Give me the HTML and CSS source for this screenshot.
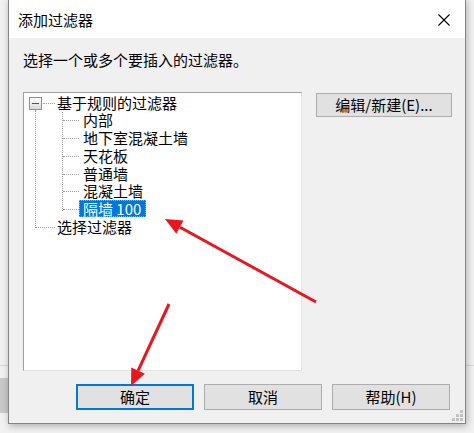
FILE: index.html
```html
<!DOCTYPE html>
<html lang="zh-CN">
<head>
<meta charset="utf-8">
<title>添加过滤器</title>
<link rel="stylesheet" href="styles.css">
</head>
<body>
<div class="desktop">
  <div class="desk-gap1"></div>
  <div class="desk-line"></div>
  <div class="desk-gap2"></div>
  <div class="desk-band"></div>
</div>

<div class="dialog">
  <div class="titlebar">
    <span class="title">添加过滤器</span>
    <svg class="close" width="12" height="12" viewBox="0 0 12 12"><path d="M0.5 0.5 L11.5 11.5 M11.5 0.5 L0.5 11.5" stroke="#000" stroke-width="1.1" fill="none"/></svg>
  </div>
  <div class="content">
    <div class="prompt">选择一个或多个要插入的过滤器。</div>
    <div class="main">
      <div class="tree">
        <ul class="lvl0">
          <li>
            <div class="row"><span class="toggle"></span><span class="hl root-hl"></span><span class="label">基于规则的过滤器</span></div>
            <ul class="lvl1">
              <li><span class="hl"></span><span class="label">内部</span></li>
              <li><span class="hl"></span><span class="label">地下室混凝土墙</span></li>
              <li><span class="hl"></span><span class="label">天花板</span></li>
              <li><span class="hl"></span><span class="label">普通墙</span></li>
              <li><span class="hl"></span><span class="label">混凝土墙</span></li>
              <li><span class="hl"></span><span class="label selected">隔墙 100</span></li>
            </ul>
          </li>
          <li>
            <div class="row last-row"><span class="hl sib-hl"></span><span class="label">选择过滤器</span></div>
          </li>
        </ul>
      </div>
      <div class="side">
        <button class="btn edit">编辑/新建(E)...</button>
      </div>
    </div>
    <div class="actions">
      <button class="btn default">确定</button>
      <button class="btn">取消</button>
      <button class="btn">帮助(H)</button>
    </div>
  </div>
  <svg class="grip" width="12" height="12" viewBox="0 0 12 12">
    <rect x="8" y="0" width="3" height="3" fill="#c2c2c2"/>
    <rect x="4" y="4" width="3" height="3" fill="#c2c2c2"/>
    <rect x="8" y="4" width="3" height="3" fill="#c2c2c2"/>
    <rect x="0" y="8" width="3" height="3" fill="#c2c2c2"/>
    <rect x="4" y="8" width="3" height="3" fill="#c2c2c2"/>
    <rect x="8" y="8" width="3" height="3" fill="#c2c2c2"/>
  </svg>
</div>

<svg class="arrows" width="474" height="433" viewBox="0 0 474 433">
  <line x1="316" y1="302" x2="180" y2="227.2" stroke="#e8161e" stroke-width="3"/>
  <polygon points="165,219 183.5,220.6 176.3,233.8" fill="#e8161e"/>
  <line x1="169" y1="304" x2="138.1" y2="370.6" stroke="#e8161e" stroke-width="3"/>
  <polygon points="131,386 144.9,373.7 131.3,367.4" fill="#e8161e"/>
</svg>
</body>
</html>
```

FILE: styles.css
```css
html, body {
  margin: 0;
  padding: 0;
}
body {
  width: 474px;
  height: 433px;
  overflow: hidden;
  background: #f1f1f1;
  position: relative;
  font-family: "Noto Sans CJK SC", "Noto Sans", sans-serif;
  color: #000;
}

/* desktop behind the window */
.desktop {
  display: flex;
  flex-direction: column;
}
.desk-gap1 { height: 365px; }
.desk-line { height: 1px; background: #d6d6d6; }
.desk-gap2 { height: 12px; }
.desk-band { height: 35px; width: 40px; background: #c8c8c8; }

/* the dialog window */
.dialog {
  position: absolute;
  left: 8px;
  top: -1px;
  width: 458px;
  height: 425px;
  box-sizing: border-box;
  border: 1px solid #858585;
  background: #f0f0f0;
  box-shadow: 1px 2px 7px rgba(0, 0, 0, 0.28);
  display: flex;
  flex-direction: column;
}

.titlebar {
  height: 38px;
  flex: none;
  background: #fff;
  display: flex;
  align-items: center;
  justify-content: space-between;
  padding: 0 15px 0 9px;
}
.title {
  font-size: 15px;
  line-height: 20px;
  margin-top: 1px;
}
.close {
  display: block;
  margin-top: 1px;
}

.content {
  flex: 1;
  display: flex;
  flex-direction: column;
  padding: 12px 13px 0 14px;
}
.prompt {
  font-size: 15px;
  line-height: 20px;
  height: 20px;
}

.main {
  display: flex;
  align-items: flex-start;
  gap: 14px;
  margin-top: 22px;
}

/* tree view */
.tree {
  width: 279px;
  height: 279px;
  box-sizing: border-box;
  background: #fff;
  border-top: 1px solid #a0a0a0;
  border-left: 1px solid #a0a0a0;
  border-right: 1px solid #e3e3e3;
  border-bottom: 1px solid #e3e3e3;
  padding-top: 1px;
  font-size: 15px;
}
.tree ul {
  list-style: none;
  margin: 0;
  padding: 0;
}
.lvl0 {
  position: relative;
}
.lvl0::before {
  content: "";
  position: absolute;
  left: 11px;
  top: 16px;
  height: 118px;
  border-left: 1px dotted #a0a0a0;
}
.row {
  display: flex;
  align-items: center;
  height: 18px;
  padding-left: 5px;
}
.last-row {
  padding-left: 12px;
  height: 17px;
}
.toggle {
  width: 13px;
  height: 13px;
  box-sizing: border-box;
  border: 1px solid #919191;
  background: linear-gradient(#ffffff, #d9d9d9);
  display: flex;
  align-items: center;
  justify-content: center;
  position: relative;
  z-index: 1;
}
.toggle::after {
  content: "";
  width: 7px;
  height: 1px;
  background: #3b56a3;
}
.hl {
  height: 0;
  border-top: 1px dotted #a0a0a0;
  flex: none;
}
.root-hl {
  width: 12px;
  margin: 0 2px 0 1px;
}
.sib-hl {
  width: 19px;
  margin-right: 2px;
}
.label {
  line-height: 17px;
  height: 17px;
  white-space: nowrap;
  margin-bottom: 2px;
}

.lvl1 {
  position: relative;
}
.lvl1::before {
  content: "";
  position: absolute;
  left: 38px;
  top: 0;
  height: 99px;
  border-left: 1px dotted #a0a0a0;
}
.lvl1 li {
  display: flex;
  align-items: center;
  height: 18px;
  padding-left: 39px;
}
.lvl1 li:nth-child(odd) {
  height: 17.6px;
}
.lvl1 .hl {
  width: 16px;
}
.lvl1 .label {
  padding: 0 5px 0 4px;
}
.label.selected {
  background: #0078d7;
  color: #fff;
  outline: 1px dotted #f0a050;
  outline-offset: -1px;
}

/* buttons */
.btn {
  font-family: "Noto Sans CJK SC", "Noto Sans", sans-serif;
  font-size: 15px;
  line-height: 18px;
  color: #000;
  background: #e1e1e1;
  border: 1px solid #adadad;
  box-sizing: border-box;
  padding: 0;
  margin: 0;
}
.edit {
  width: 136px;
  height: 24px;
}
.actions {
  display: flex;
  gap: 10px;
  margin-top: 13px;
  padding-left: 53px;
}
.actions .btn {
  width: 118px;
  height: 26px;
}
.btn.default {
  border: 2px solid #0078d7;
}

.grip {
  position: absolute;
  right: 1px;
  bottom: 1px;
}

.arrows {
  position: absolute;
  left: 0;
  top: 0;
  pointer-events: none;
}
```
